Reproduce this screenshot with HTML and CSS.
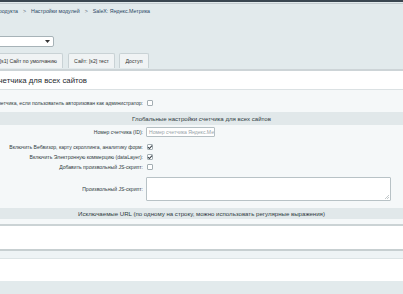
FILE: index.html
```html
<!DOCTYPE html>
<html lang="ru">
<head>
  <meta charset="UTF-8">
  <title>SaleX: Яндекс.Метрика</title>
  <link rel="stylesheet" href="styles.css">
</head>
<body>
  <div class="topbar"></div>
  <div class="topline"></div>

  <div class="navchain">
    <span class="crumb crumb-first">Настройки продукта</span>
    <span class="sep">&gt;</span>
    <span class="crumb">Настройки модулей</span>
    <span class="sep">&gt;</span>
    <span class="crumb">SaleX: Яндекс.Метрика</span>
  </div>

  <div class="site-select">
    <svg class="select-arrow" width="5" height="3" viewBox="0 0 5 3"><path d="M0 0h5L2.5 3z" fill="#333"/></svg>
  </div>

  <div class="tabs">
    <div class="tab tab-first">[s1] Сайт по умолчанию</div>
    <div class="tab tab-second">Сайт: [s2] тест</div>
    <div class="tab tab-third">Доступ</div>
  </div>

  <div class="panel">
    <div class="panel-title"><span class="title-text">Настройки счетчика для всех сайтов</span></div>

    <div class="form">
      <div class="row row-first">
        <div class="label">Не выводить код счетчика, если пользователь авторизован как администратор:</div>
        <div class="field"><span class="checkbox"></span></div>
      </div>

      <div class="heading">Глобальные настройки счетчика для всех сайтов</div>

      <div class="row row-id">
        <div class="label">Номер счетчика (ID):</div>
        <div class="field"><div class="input">Номер счетчика Яндекс.Метрика</div></div>
      </div>
      <div class="row">
        <div class="label">Включить Вебвизор, карту скроллинга, аналитику форм:</div>
        <div class="field">
          <span class="checkbox">
            <svg width="6" height="6" viewBox="0 0 6 6"><path d="M1 3.1l1.4 1.4L5 1.6" fill="none" stroke="#3b444a" stroke-width="1.1"/></svg>
          </span>
        </div>
      </div>
      <div class="row">
        <div class="label">Включить Электронную коммерцию (dataLayer):</div>
        <div class="field">
          <span class="checkbox">
            <svg width="6" height="6" viewBox="0 0 6 6"><path d="M1 3.1l1.4 1.4L5 1.6" fill="none" stroke="#3b444a" stroke-width="1.1"/></svg>
          </span>
        </div>
      </div>
      <div class="row">
        <div class="label">Добавить произвольный JS-скрипт:</div>
        <div class="field"><span class="checkbox"></span></div>
      </div>
      <div class="row row-text">
        <div class="label">Произвольный JS-скрипт:</div>
        <div class="field">
          <div class="textarea">
            <svg class="grip" width="4" height="4" viewBox="0 0 4 4"><path d="M4 0L0 4M4 2L2 4" stroke="#9aa4a8" stroke-width="0.6"/></svg>
          </div>
        </div>
      </div>

      <div class="heading heading-urls">Исключаемые URL (по одному на строку, можно использовать регулярные выражения)</div>
    </div>

    <div class="url-box"></div>
    <div class="url-bar"></div>
    <div class="url-box url-box-last"></div>
  </div>
</body>
</html>
```

FILE: styles.css
```css
body {
  margin: 0;
  background: #e2eaec;
  font-family: 'Liberation Sans', Arial, sans-serif;
  font-size: 5.1px;
  color: #2f3a40;
  overflow: hidden;
}
.topbar {
  height: 2px;
  background: #3a4650;
}
.topline {
  height: 1px;
  margin-top: 1px;
  background: #c4ccd0;
}
.navchain {
  display: flex;
  align-items: center;
  height: 14px;
  white-space: nowrap;
  font-size: 5.3px;
  color: #2a4864;
}
.crumb-first {
  display: flex;
  justify-content: flex-end;
  flex: none;
  width: 18px;
}
.sep {
  margin: 0 5px;
  color: #5b6b78;
}
.site-select {
  display: flex;
  align-items: center;
  justify-content: flex-end;
  box-sizing: border-box;
  width: 75px;
  height: 11px;
  margin: 18px 0 0 -21px;
  padding: 0 3px;
  background: #fff;
  border: 1px solid #a7b3b8;
  border-radius: 2px;
}
.tabs {
  display: flex;
  gap: 4px;
  height: 15px;
  margin: 6px 0 1px -20px;
  font-size: 5.2px;
}
.tab {
  display: flex;
  align-items: center;
  justify-content: center;
  box-sizing: border-box;
  white-space: nowrap;
  background: #f0f3f4;
  border: 1px solid #c9d2d5;
  border-bottom: none;
  border-radius: 2px 2px 0 0;
  color: #333;
}
.tab-first {
  justify-content: flex-end;
  width: 83px;
  margin-right: 1px;
  padding-right: 5px;
}
.tab-second {
  width: 47px;
}
.tab-third {
  width: 30px;
}
.panel {
  border-top: 2px solid #cdd4d7;
  background: #f5f8f9;
}
.panel-title {
  display: flex;
  align-items: center;
  height: 18px;
  background: #fff;
  border-bottom: 1px solid #dbe1e3;
  font-size: 7.8px;
  color: #1f2a30;
  white-space: nowrap;
}
.title-text {
  display: flex;
  justify-content: flex-end;
  flex: none;
  width: 87px;
}
.form {
  padding: 8px 0 5px;
}
.row {
  display: grid;
  grid-template-columns: 143px 1fr;
  column-gap: 3px;
  height: 10px;
  align-items: center;
}
.label {
  display: flex;
  justify-content: flex-end;
  white-space: nowrap;
}
.field {
  display: flex;
  align-items: center;
}
.checkbox {
  display: flex;
  align-items: center;
  justify-content: center;
  box-sizing: border-box;
  width: 6px;
  height: 6px;
  margin-left: 1px;
  background: #fff;
  border: 1px solid #a3aeb3;
  border-radius: 1px;
}
.checkbox svg {
  flex: none;
}
.heading {
  height: 13px;
  line-height: 13px;
  margin: 4px 0 2px;
  text-align: center;
  white-space: nowrap;
  background: #e1e8ea;
  font-size: 6.1px;
  color: #2e3a40;
}
.row-id {
  margin-bottom: 5px;
}
.input {
  box-sizing: border-box;
  width: 69px;
  height: 10px;
  line-height: 8px;
  padding: 0 2px;
  overflow: hidden;
  white-space: nowrap;
  background: #fff;
  border: 1px solid #b5bfc3;
  border-radius: 1px;
  color: #98a3a8;
}
.row-text {
  height: 24px;
  margin-top: 5px;
}
.textarea {
  position: relative;
  box-sizing: border-box;
  width: 245px;
  height: 24px;
  background: #fff;
  border: 1px solid #b8c2c6;
  border-radius: 1px;
}
.grip {
  position: absolute;
  right: 1px;
  bottom: 1px;
}
.heading-urls {
  height: 11px;
  line-height: 11px;
  margin: 7px 0 0;
}
.url-box {
  height: 23px;
  background: #fff;
  border-top: 2px solid #cbd3d5;
}
.url-bar {
  height: 7px;
  background: #eef3f5;
  border-top: 2px solid #c7cfd1;
  border-bottom: 1px solid #dde4e6;
}
.url-box-last {
  height: 22px;
  border-top: none;
}
```
